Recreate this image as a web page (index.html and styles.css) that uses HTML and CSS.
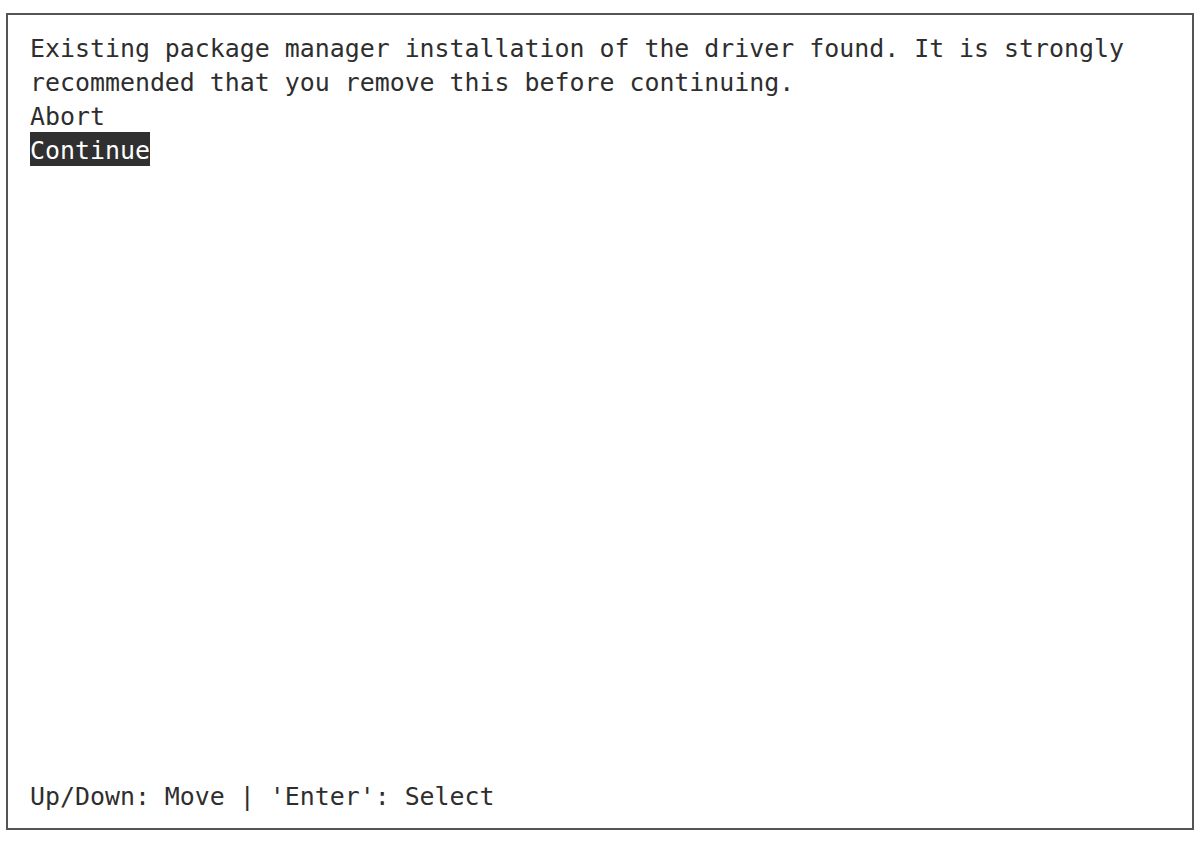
FILE: index.html
```html
<!DOCTYPE html>
<html>
<head>
<meta charset="utf-8">
<link rel="stylesheet" href="styles.css">
</head>
<body>
<div class="term">
  <div class="content">
    <div class="line">Existing package manager installation of the driver found. It is strongly</div>
    <div class="line">recommended that you remove this before continuing.</div>
    <div class="line opt">Abort</div>
    <div class="line opt selected">Continue</div>
  </div>
  <div class="footer line">Up/Down: Move | 'Enter': Select</div>
</div>
</body>
</html>
```
FILE: styles.css
```css
html, body {
  margin: 0;
  padding: 0;
  background: #ffffff;
}
body {
  padding: 13px 10px 11px 6px;
}
.term {
  box-sizing: border-box;
  width: 1188px;
  height: 817px;
  border: 2px solid #555555;
  padding: 15px 20px 16px 22px;
  display: flex;
  flex-direction: column;
  justify-content: space-between;
  font-family: "DejaVu Sans Mono", monospace;
  font-size: 24.9px;
  color: #2e2e2e;
}
.line {
  box-sizing: border-box;
  height: 34px;
  padding-top: 4px;
  line-height: 30px;
  white-space: pre;
}
.opt {
  width: fit-content;
}
.selected {
  background: #303030;
  color: #ffffff;
}
```
